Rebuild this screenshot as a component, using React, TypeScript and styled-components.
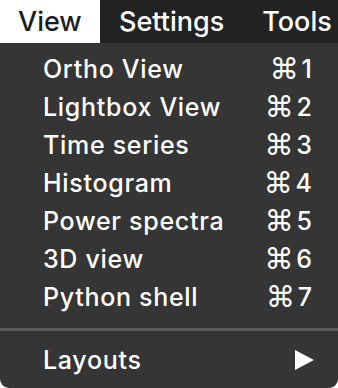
import styled, { createGlobalStyle } from "styled-components";

const GlobalStyle = createGlobalStyle`
  html, body {
    margin: 0;
    padding: 0;
    background: #ffffff;
  }
  body {
    font-family: Inter, "Noto Sans", "DejaVu Sans", sans-serif;
    -webkit-font-smoothing: antialiased;
  }
`;

interface IMenuEntry {
  label: string;
  shortcut: string;
}

const entries: IMenuEntry[] = [
  { label: "Ortho View", shortcut: "1" },
  { label: "Lightbox View", shortcut: "2" },
  { label: "Time series", shortcut: "3" },
  { label: "Histogram", shortcut: "4" },
  { label: "Power spectra", shortcut: "5" },
  { label: "3D view", shortcut: "6" },
  { label: "Python shell", shortcut: "7" },
];

export default function App() {
  return (
    <>
      <GlobalStyle />
      <Screen>
        <MenuBar>
          <BarItem active>View</BarItem>
          <BarItem>Settings</BarItem>
          <BarItem>Tools</BarItem>
        </MenuBar>
        <Dropdown>
          <ItemList>
            {entries.map((entry) => (
              <Item key={entry.label}>
                <Label>{entry.label}</Label>
                <Shortcut>
                  <Cmd>⌘</Cmd>
                  {entry.shortcut}
                </Shortcut>
              </Item>
            ))}
          </ItemList>
          <Separator />
          <Item>
            <Label>Layouts</Label>
            <Arrow viewBox="0 0 19 20">
              <path d="M0 0 L19 10 L0 20 Z" fill="#ffffff" />
            </Arrow>
          </Item>
        </Dropdown>
      </Screen>
    </>
  );
}

const Screen = styled.div`
  width: 338px;
  height: 388px;
  display: flex;
  flex-direction: column;
  overflow: hidden;
`;

const MenuBar = styled.div`
  height: 43px;
  display: flex;
  align-items: stretch;
  background: #222222;
`;

const BarItem = styled.div<{ active?: boolean }>`
  display: flex;
  align-items: center;
  padding: 0 19px;
  font-size: 27px;
  font-weight: 500;
  white-space: nowrap;
  color: ${({ active }) => (active ? "#1c1c1c" : "#ffffff")};
  background: ${({ active }) => (active ? "#ffffff" : "transparent")};
  &:first-child {
    width: 100px;
    padding-left: 18px;
    box-sizing: border-box;
  }
`;

const Dropdown = styled.div`
  flex: 1;
  display: flex;
  flex-direction: column;
  background: #353535;
  border-radius: 0 0 9px 9px;
  padding-top: 7px;
`;

const ItemList = styled.div`
  display: flex;
  flex-direction: column;
`;

const Item = styled.div`
  height: 38px;
  display: flex;
  align-items: center;
  justify-content: space-between;
  padding: 0 24px 0 43px;
  color: #ffffff;
`;

const Label = styled.span`
  font-size: 25px;
  font-weight: 500;
  letter-spacing: 0.7px;
`;

const Shortcut = styled.span`
  display: flex;
  align-items: center;
  gap: 3px;
  font-size: 25px;
  font-weight: 500;
  margin-right: 2px;
`;

const Cmd = styled.span`
  font-family: "DejaVu Sans", sans-serif;
  font-size: 29px;
  line-height: 1;
`;

const Separator = styled.div`
  height: 3px;
  margin: 12px 0 10px;
  background: #5c5c5c;
`;

const Arrow = styled.svg`
  width: 19px;
  height: 20px;
`;
